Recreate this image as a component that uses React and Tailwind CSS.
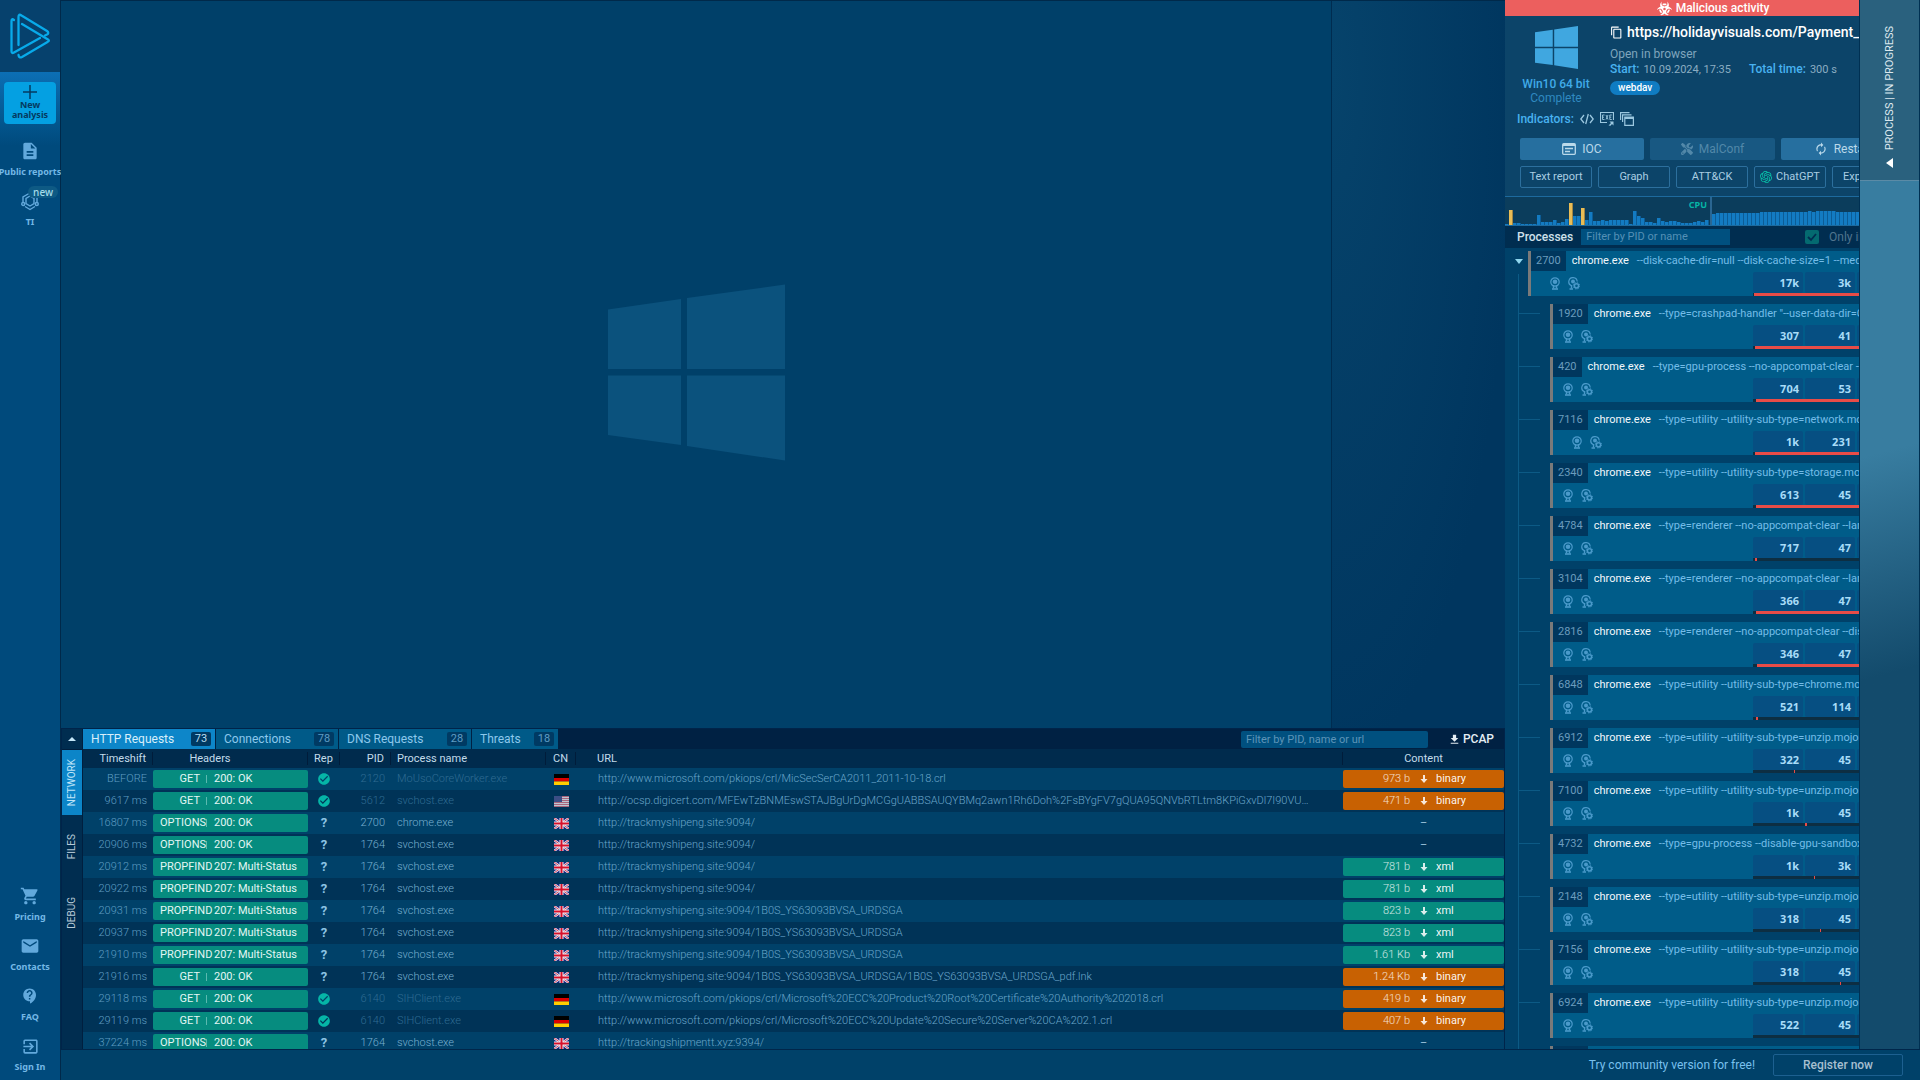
import React from "react";
import {
  MdDescription,
  MdShoppingCart,
  MdEmail,
  MdContactSupport,
  MdExitToApp,
  MdContentCopy,
  MdAutorenew,
  MdFileDownload,
  MdCheckCircle,
} from "react-icons/md";
import { FaBiohazard, FaScrewdriverWrench } from "react-icons/fa6";
import { SiOpenai } from "react-icons/si";

const WindowsLogo = ({ className }) => (
  <svg viewBox="0 0 177 177" className={className} fill="currentColor" aria-hidden="true">
    <path d="M0 25.500L73 15V85H0ZM79 14L177 0.500V85H79ZM0 91.500H73V161L0 151ZM79 91.500H177V176.500L79 162Z" />
  </svg>
);

const BrandLogo = () => (
  <svg viewBox="0 0 42 48" className="h-12 w-[42px]" fill="none" stroke="#08aaea" strokeWidth="2.300" strokeLinejoin="round" strokeLinecap="round" aria-hidden="true">
    <path d="M5 8Q2.500 6 2.500 9V39Q2.500 42 5 40.500L31 26" />
    <path d="M9.500 33V5Q9.500 1.500 12.500 3.500L38 19Q40.500 21 38 22.500L36 23.500" />
    <path d="M13 12L39 27.500Q41 29 38.500 30L13 45Q10 46.500 9.500 43" />
  </svg>
);

const Hexagon = () => (
  <svg viewBox="0 0 18 20" className="h-5 w-[18px]" fill="none" stroke="currentColor" strokeWidth="1.400" aria-hidden="true">
    <path d="M9 5L13 7.500V12.500L9 15L5 12.500V7.500Z" />
    <path d="M2 11V6L8 2.500M16 11V6M4 15.500L9 18.500L14 15.500" />
    <circle cx="2.200" cy="13" r="1.500" />
    <circle cx="15.800" cy="13" r="1.500" />
  </svg>
);

const CodeIcon = () => (
  <svg viewBox="0 0 14 12" className="h-3 w-3.5" fill="none" stroke="currentColor" strokeWidth="1.300" aria-hidden="true">
    <path d="M4 2L0.800 6L4 10M10 2L13.200 6L10 10M8.300 1L5.700 11" />
  </svg>
);

const ExeIcon = () => (
  <svg viewBox="0 0 14 14" className="h-3.5 w-3.5" fill="none" stroke="currentColor" aria-hidden="true">
    <path d="M7 10.500H0.500V0.500H13.500V8" strokeWidth="1.200" />
    <path d="M4.500 3H2.500V7.500H4.500M2.500 5.200H4M6 3L8 7.500M8 3L6 7.500M11.800 3H9.800V7.500H11.800M9.800 5.200H11.300" strokeWidth="0.900" />
    <path d="M8.500 13.500L11 11L9.500 9.500H13.500V13.500L12 12L10.500 13.800Z" fill="currentColor" stroke="none" />
  </svg>
);

const WindowsStack = () => (
  <svg viewBox="0 0 14 14" className="h-3.5 w-3.5" fill="none" stroke="currentColor" strokeWidth="1.200" aria-hidden="true">
    <path d="M0.600 8V0.600H9.500M2.600 10V2.800H11.500" />
    <path d="M4.800 5.200H13.400V13.400H4.800Z" />
    <path d="M4.800 6H13.400" strokeWidth="2" />
  </svg>
);

const ReportIcon = () => (
  <svg viewBox="0 0 14 12" className="h-3 w-3.5" fill="none" stroke="currentColor" strokeWidth="1.300" aria-hidden="true">
    <rect x="0.700" y="0.700" width="12.600" height="10.600" rx="1" />
    <path d="M1 2H13" strokeWidth="2" />
    <path d="M3 5.500H11M3 8.500H8" />
  </svg>
);

const Badge = () => (
  <svg viewBox="0 0 10 13" className="h-[13px] w-2.5" fill="none" stroke="currentColor" aria-hidden="true">
    <circle cx="5" cy="5" r="4.200" strokeWidth="1.200" />
    <circle cx="5" cy="4.800" r="2.300" fill="currentColor" stroke="none" />
    <path d="M3.500 8V11.500M6.500 8V11.500" strokeWidth="1.500" />
    <path d="M2 12H8" strokeWidth="1.600" />
  </svg>
);

const BadgeGear = () => (
  <svg viewBox="0 0 12 13" className="h-[13px] w-3" fill="none" stroke="currentColor" aria-hidden="true">
    <path d="M3.500 8.700A4.200 4.200 0 1 1 9.200 4.500" strokeWidth="1.200" />
    <circle cx="5" cy="4.500" r="2" fill="currentColor" stroke="none" />
    <path d="M3.500 8V11.500" strokeWidth="1.400" />
    <path d="M1.500 12H5" strokeWidth="1.500" />
    <circle cx="8.500" cy="8.800" r="2.100" strokeWidth="1.500" />
    <circle cx="8.500" cy="8.800" r="3.200" strokeWidth="0.900" strokeDasharray="1.400 1.100" />
  </svg>
);

const DownArrow = () => (
  <svg viewBox="0 0 8 8" className="h-2 w-2" fill="currentColor" aria-hidden="true">
    <path d="M3 0H5V4H7.500L4 8L0.500 4H3Z" />
  </svg>
);

const Flag = ({ code }) => {
  if (code === "de")
    return (
      <svg viewBox="0 0 15 11" className="h-[11px] w-[15px]" role="img" aria-label="Germany">
        <path fill="#000" d="M0 0H15V4H0Z" />
        <path fill="#dd0000" d="M0 4H15V7.500H0Z" />
        <path fill="#ffce00" d="M0 7.500H15V11H0Z" />
      </svg>
    );
  if (code === "us")
    return (
      <svg viewBox="0 0 15 11" className="h-[11px] w-[15px]" role="img" aria-label="United States">
        <path fill="#d3d5df" d="M0 0H15V11H0Z" />
        <path stroke="#bb6a80" d="M0 0.500H15M0 2.500H15M0 4.500H15M0 6.500H15M0 8.500H15M0 10.500H15" />
        <path fill="#43518a" d="M0 0H8V6H0Z" />
      </svg>
    );
  return (
    <svg viewBox="0 0 15 11" className="h-[11px] w-[15px]" role="img" aria-label="United Kingdom">
      <path fill="#1a237b" d="M0 0H15V11H0Z" />
      <path stroke="#dfe3f0" strokeWidth="2.400" d="M0 0L15 11M15 0L0 11" />
      <path stroke="#d83045" strokeWidth="0.900" d="M0 0L15 11M15 0L0 11" />
      <path stroke="#eef0f8" strokeWidth="4" d="M7.500 0V11M0 5.500H15" />
      <path stroke="#d8102a" strokeWidth="2" d="M7.500 0V11M0 5.500H15" />
    </svg>
  );
};

const NavItem = ({ icon, label }) => (
  <a href="#" className="flex h-10 flex-col items-center text-[#62a9dc]">
    <span className="flex h-[22px] items-center">{icon}</span>
    <span className="mt-0.5 text-[9px] leading-4 font-bold whitespace-nowrap text-[#74b8e6]">{label}</span>
  </a>
);

const Sidebar = () => (
  <nav className="flex w-[61px] shrink-0 flex-col border-r border-[#00294a] bg-[#004a7c] font-['Noto_Sans',sans-serif]">
    <a href="#" aria-label="Home" className="flex h-[72px] items-center justify-center bg-[#06416d]">
      <BrandLogo />
    </a>
    <div className="h-[74px] bg-linear-to-b from-[#0c6fb5] to-[#004a7c] px-1 pt-2.5">
      <button className="flex h-[42px] w-full flex-col items-center rounded bg-[#04a0e2] pt-[3px] text-[9px] leading-[10px] font-bold text-[#053a60]">
        <svg viewBox="0 0 14 14" className="mb-px h-3.5 w-3.5 shrink-0" stroke="currentColor" strokeWidth="1.500" aria-hidden="true">
          <path d="M7 0V14M0 7H14" />
        </svg>
        <span>New<br />analysis</span>
      </button>
    </div>
    <div className="-mt-1.5 flex flex-col gap-2.5">
      <NavItem label="Public reports" icon={<MdDescription size={20} />} />
      <div className="relative">
        <NavItem label="TI" icon={<Hexagon />} />
        <span className="absolute -top-1 right-0.5 rounded-full bg-[#0e5a84] px-[5px] text-[10px] leading-3 font-medium text-[#a5dcea]">new</span>
      </div>
    </div>
    <div className="mt-auto flex flex-col gap-2.5 pb-[5px]">
      <NavItem label="Pricing" icon={<MdShoppingCart size={20} />} />
      <NavItem label="Contacts" icon={<MdEmail size={20} />} />
      <NavItem label="FAQ" icon={<MdContactSupport size={18} />} />
      <NavItem label="Sign In" icon={<MdExitToApp size={19} />} />
    </div>
  </nav>
);

const tabs = [
  ["HTTP Requests", 73, "w-[132px]"],
  ["Connections", 78, "w-[122px]"],
  ["DNS Requests", 28, "w-[132px]"],
  ["Threats", 18, "w-[86px]"],
];

const T = "http://trackmyshipeng.site:9094/";
const U = "1B0S_YS63093BVSA_URDSGA";
const M = "http://www.microsoft.com/pkiops/crl/";
const requests = [
  ["BEFORE", "GET", "200: OK", true, 2120, "MoUsoCoreWorker.exe", "de", M + "MicSecSerCA2011_2011-10-18.crl", "973 b", "binary"],
  ["9617 ms", "GET", "200: OK", true, 5612, "svchost.exe", "us", "http://ocsp.digicert.com/MFEwTzBNMEswSTAJBgUrDgMCGgUABBSAUQYBMq2awn1Rh6Doh%2FsBYgFV7gQUA95QNVbRTLtm8KPiGxvDl7I90VUCEAJ0LqoXyo4hxxe7H", "471 b", "binary"],
  ["16807 ms", "OPTIONS", "200: OK", false, 2700, "chrome.exe", "gb", T],
  ["20906 ms", "OPTIONS", "200: OK", false, 1764, "svchost.exe", "gb", T],
  ["20912 ms", "PROPFIND", "207: Multi-Status", false, 1764, "svchost.exe", "gb", T, "781 b", "xml"],
  ["20922 ms", "PROPFIND", "207: Multi-Status", false, 1764, "svchost.exe", "gb", T, "781 b", "xml"],
  ["20931 ms", "PROPFIND", "207: Multi-Status", false, 1764, "svchost.exe", "gb", T + U, "823 b", "xml"],
  ["20937 ms", "PROPFIND", "207: Multi-Status", false, 1764, "svchost.exe", "gb", T + U, "823 b", "xml"],
  ["21910 ms", "PROPFIND", "207: Multi-Status", false, 1764, "svchost.exe", "gb", T + U, "1.61 Kb", "xml"],
  ["21916 ms", "GET", "200: OK", false, 1764, "svchost.exe", "gb", T + U + "/" + U + "_pdf.lnk", "1.24 Kb", "binary"],
  ["29118 ms", "GET", "200: OK", true, 6140, "SIHClient.exe", "de", M + "Microsoft%20ECC%20Product%20Root%20Certificate%20Authority%202018.crl", "419 b", "binary"],
  ["29119 ms", "GET", "200: OK", true, 6140, "SIHClient.exe", "de", M + "Microsoft%20ECC%20Update%20Secure%20Server%20CA%202.1.crl", "407 b", "binary"],
  ["37224 ms", "OPTIONS", "200: OK", false, 1764, "svchost.exe", "gb", "http://trackingshipmentt.xyz:9394/"],
];

const headings = [
  ["Timeshift", "w-[70px]", "justify-end pr-1.5"],
  ["Headers", "w-[155px]", "justify-center pr-10"],
  ["Rep", "w-8", "justify-center"],
  ["PID", "w-[51px]", "justify-end pr-1.5"],
  ["Process name", "w-[155px]", "pl-1.5"],
  ["CN", "w-[30px]", "justify-center"],
  ["URL", "", "pl-[21px]"],
  ["Content", "w-[161px]", "justify-center"],
];

const RequestRow = ({ r }) => {
  const [time, method, status, known, pid, name, cn, url, size, kind] = r;
  const dim = known ? "text-[#2f6b92]" : "text-[#78b0d0]";
  return (
    <tr className="h-[22px] odd:bg-[#004169] even:bg-[#003357]">
      <td className="pr-1.5 text-right text-[#5f9dc2]">{time}</td>
      <td>
        <div className="flex h-[18px] items-center rounded-xs bg-[#068c7f] pl-[7px] font-normal whitespace-nowrap text-[#e3f6f4]">
          <span className="flex w-10 justify-end">
            <span className={method === "GET" ? "" : "w-10"}>{method}</span>
          </span>
          <span className={"mx-1.5 h-2 w-px " + (method === "PROPFIND" ? "" : "bg-[#5bb9b0]")} />
          <span className="pl-px">{status}</span>
        </div>
      </td>
      <td>
        <div className="flex justify-center text-[13px] font-bold text-[#8cc4e4]">
          {known ? <MdCheckCircle size={14} className="text-[#05b5a7]" aria-label="Known" /> : "?"}
        </div>
      </td>
      <td className={"pr-1.5 text-right " + dim}>{pid}</td>
      <td className={"pl-1.5 " + dim}>{name}</td>
      <td>
        <div className={"flex justify-center " + (cn === "us" ? "opacity-90" : "")}><Flag code={cn} /></div>
      </td>
      <td className="pr-[34px] pl-[22px] text-[#6aa6ca]"><div className="truncate">{url}</div></td>
      <td>
        {kind ? (
          <button className={"flex h-[18px] w-full items-center rounded-xs " + (kind === "xml" ? "bg-[#068c7f]" : "bg-[#c86102]")}>
            <span className="w-[67px] text-right text-white/80">{size}</span>
            <span className="mr-2 ml-2.5 text-white/85"><DownArrow /></span>
            <span className="font-normal text-white/95">{kind}</span>
          </button>
        ) : (
          <div className="text-center font-normal text-[#9fc7de]">–</div>
        )}
      </td>
    </tr>
  );
};

const SideTab = ({ label, active, className }) => (
  <button className={"flex w-full items-center justify-center " + className + (active ? " bg-[#0c85c8] text-[#bfe4f8]" : " text-[#b6c9d6]")}>
    <span className="rotate-180 text-[10px] leading-3 [writing-mode:vertical-rl]">{label}</span>
  </button>
);

const NetworkPanel = () => (
  <section className="flex h-[321px] shrink-0 border-t border-r border-l border-[#00244a] bg-[#002d50]">
    <div className="flex w-[21px] shrink-0 flex-col border-r border-[#001f3f]">
      <button className="flex h-[21px] items-center justify-center border-b border-[#001f3f]" aria-label="Expand">
        <svg viewBox="0 0 8 4" className="h-1 w-2" fill="#c4e6f8"><path d="M0 4L4 0L8 4Z" /></svg>
      </button>
      <SideTab label="NETWORK" active className="h-[65px]" />
      <SideTab label="FILES" className="h-16" />
      <SideTab label="DEBUG" className="h-[68px]" />
    </div>
    <div className="flex min-w-0 flex-1 flex-col">
      <div className="flex h-5 shrink-0 items-center bg-[#002143]">
        <div className="flex h-5 gap-px">
          {tabs.map(([label, n, w], i) => (
            <button key={label} className={"flex h-full items-center justify-between pr-1 pl-2 text-[12px] whitespace-nowrap " + w + (i === 0 ? " bg-[#0d86c9] text-[#d8effb]" : " bg-[#005a88] text-[#8cc8ec]")}>
              {label}
              <span className={"flex h-3.5 w-5 items-center justify-center rounded-xs bg-[#003a63] text-[11px] " + (i === 0 ? "text-[#b8dcf0]" : "text-[#5f9cc4]")}>{n}</span>
            </button>
          ))}
        </div>
        <input aria-label="Filter requests" placeholder="Filter by PID, name or url" className="ml-auto h-[17px] w-[187px] rounded-xs bg-[#00507f] px-[5px] text-[11px] text-white placeholder:text-[#5d94b8]" />
        <a href="#" className="mr-2.5 ml-5 flex items-center text-[12px] font-medium text-[#e4edf3]">
          <MdFileDownload size={13} className="mr-0.5" />
          PCAP
        </a>
      </div>
      <div className="flex-1 overflow-hidden">
        <table className="w-full table-fixed border-collapse text-left text-[11px] leading-4 font-light">
          <thead>
            <tr className="h-[19px] bg-[#002b4d]">
              {headings.map(([label, w, inner], i) => (
                <th key={label} className={"p-0 font-normal text-[#c3dcea] " + w}>
                  <div className={"flex h-[13px] items-center whitespace-nowrap " + inner + (i === 7 ? "" : " border-r border-[#001c3a]")}>{label}</div>
                </th>
              ))}
            </tr>
          </thead>
          <tbody>
            {requests.map((r) => <RequestRow key={r[0]} r={r} />)}
          </tbody>
        </table>
      </div>
    </div>
  </section>
);

const cpu = [1, 15, 2, 2, 1, 1, 1, 1, 10, 3, 3, 3, 5, 2, 3, 6, 22, 9, 9, 17, 5, 13, 4, 4, 5, 4, 5, 5, 5, 5, 5, 1, 14, 9, 7, 3, 3, 2, 7, 4, 3, 4, 4, 3, 2, 2, 2, 3, 4, 3, 5];
const ram = [11, 12, 12, 12, 12, 12, 12, 12, 12, 12, 12, 12, 13, 13, 13, 13, 13, 13, 13, 13, 13, 13, 13, 13, 14, 13, 14, 14, 14, 14, 14, 13, 13, 13, 13, 13, 13];

const Bars = ({ data, className }) => (
  <div className={"flex h-full items-end overflow-hidden " + className}>
    {data.map((h, i) => (
      <span key={i} style={{ height: h }} className={"w-1 shrink-0 border-r " + (h >= 15 ? "border-[#a08444] bg-[#e9bd56]" : "border-[#0c5c96] bg-[#137bc2]")} />
    ))}
  </div>
);

const UT = "--type=utility --utility-sub-type=";
const RT = "--type=renderer --no-appcompat-clear ";
/* pid, command line, counters, activity bar start and length */
const processes = [
  [1920, '--type=crashpad-handler "--user-data-dir=C:\\Users', "307", "41", 2, 104],
  [420, "--type=gpu-process --no-appcompat-clear --gpu-preferences", "704", "53", 3, 103],
  [7116, UT + "network.mojom.NetworkService", "1k", "231", 2, 104],
  [2340, UT + "storage.mojom.StorageService", "613", "45", 3, 103],
  [4784, RT + "--lang=en-US", "717", "47", 2, 2],
  [3104, RT + "--lang=en-US", "366", "47", 3, 103],
  [2816, RT + "--disable-gpu", "346", "47", 4, 102],
  [6848, UT + "chrome.mojom.ProcessorMetrics", "521", "114", 3, 2],
  [6912, UT + "unzip.mojom.Unzipper", "322", "45", 41, 1],
  [7100, UT + "unzip.mojom.Unzipper", "1k", "45", 52, 2],
  [4732, "--type=gpu-process --disable-gpu-sandbox --use-gl", "1k", "3k", 61, 1],
  [2148, UT + "unzip.mojom.Unzipper", "318", "45", 67, 1],
  [7156, UT + "unzip.mojom.Unzipper", "318", "45", 87, 1],
  [6924, UT + "unzip.mojom.Unzipper", "522", "45", 0, 0],
  [6988, UT + "unzip.mojom.Unzipper", "318", "45", 0, 0],
];

const ProcessCard = ({ p, iconPad }) => {
  const [pid, cmd, a, b, start, len] = p;
  return (
    <article className="h-[45px] min-w-0 flex-1 overflow-hidden border-l-[3px] border-[#7a7a7a] bg-[#005c89]">
      <div className="flex h-5 items-center text-[11px] whitespace-nowrap">
        <span className="flex h-5 items-center bg-[#00375e] px-[5px] text-[#6b9cbd]">{pid}</span>
        <span className="ml-1.5 text-[#f0f7fb]">chrome.exe</span>
        <span className="ml-2 text-[#74bce8]">{cmd}</span>
      </div>
      <div className="flex h-[25px] justify-between">
        <div className={"flex items-center gap-2 text-[#4a9aca] " + iconPad}>
          <Badge />
          <BadgeGear />
        </div>
        <div className="w-[106px] overflow-hidden pt-px font-['Noto_Sans',sans-serif] text-[11px] font-bold text-[#a8dcf8]">
          <div className="flex h-[21px] gap-0.5 leading-[22px]">
            <span className="w-[50px] shrink-0 rounded-xs bg-[#064f82] pr-1 text-right">{a}</span>
            <span className="w-[50px] shrink-0 rounded-xs bg-[#064f82] pr-1 text-right">{b}</span>
            <span className="w-[50px] shrink-0 rounded-xs bg-[#064f82]" />
          </div>
          <div className="h-[3px] bg-[#0d2e42]">
            <div className="h-full bg-[#e84c47]" style={{ marginLeft: start, width: len }} />
          </div>
        </div>
      </div>
    </article>
  );
};

const outlined = "flex h-[22px] w-[72px] shrink-0 items-center justify-center rounded-xs border border-[#2c6f9d] text-[11px] text-[#a9cde2]";

const Details = () => (
  <aside className="flex w-[354px] shrink-0 flex-col overflow-hidden bg-[#004169]">
    <div className="flex h-4 shrink-0 items-center justify-center gap-1 bg-[#ec5f5e] pl-[62px] text-[12px] font-medium text-white">
      <FaBiohazard size={15} />
      Malicious activity
    </div>
    <div className="h-[180px] shrink-0 bg-[#0c4469]">
      <div className="flex h-[92px] pt-2.5 whitespace-nowrap">
        <div className="mr-[3px] flex w-[102px] shrink-0 flex-col items-center text-[12px] leading-[14px]">
          <WindowsLogo className="mb-2 h-[43px] w-[43px] shrink-0 text-[#40a7e0]" />
          <span className="font-medium text-[#40abe8]">Win10 64 bit</span>
          <span className="text-[#2f89c0]">Complete</span>
        </div>
        <div className="min-w-0 flex-1 text-[12px] leading-[15px]">
          <h1 className="mb-[9px] flex h-3 items-center text-[14px] font-medium text-white">
            <MdContentCopy size={13} className="mr-1 shrink-0" />
            https://holidayvisuals.com/Payment_receipt
          </h1>
          <div className="text-[#7fa5bd]">Open in browser</div>
          <div className="flex text-[11px] text-[#8badc2]">
            <span className="mr-1 text-[12px] font-medium text-[#48b2f0]">Start:</span>10.09.2024, 17:35
            <span className="mr-1 ml-[18px] text-[12px] font-medium text-[#48b2f0]">Total time:</span>300 s
          </div>
          <span className="mt-1 inline-block rounded-full bg-[#107cc2] px-2 text-[10px] leading-[14px] font-medium text-white">webdav</span>
        </div>
      </div>
      <div className="flex h-[22px] items-center gap-1.5 pl-3 text-[12px] font-medium text-[#48b2f0]">
        Indicators:
        <span className="flex items-center gap-1.5 text-[#9cc8e0]"><CodeIcon /><ExeIcon /><WindowsStack /></span>
      </div>
      <div className="mt-2 flex gap-1.5 pl-[15px] text-[12px] text-[#bad9ea]">
        <button className="flex h-[22px] w-[124px] shrink-0 items-center justify-center gap-1.5 rounded-xs bg-[#266f9f]"><ReportIcon />IOC</button>
        <button disabled className="flex h-[22px] w-[125px] shrink-0 items-center justify-center gap-1.5 rounded-xs bg-[#185882] text-[#5288a9]"><FaScrewdriverWrench size={12} />MalConf</button>
        <button className="flex h-[22px] w-[124px] shrink-0 items-center justify-center gap-1.5 rounded-xs bg-[#266f9f]"><MdAutorenew size={14} />Restart</button>
      </div>
      <div className="mt-1.5 flex gap-1.5 pl-[15px]">
        <button className={outlined}>Text report</button>
        <button className={outlined}>Graph</button>
        <button className={outlined}>ATT&amp;CK</button>
        <button className={outlined}><SiOpenai size={12} className="mr-1 text-[#08c8ac]" />ChatGPT</button>
        <button className={outlined}>
          Export
          <svg viewBox="0 0 8 5" className="ml-2.5 h-[5px] w-2" fill="currentColor" aria-hidden="true"><path d="M0 0H8L4 5Z" /></svg>
        </button>
      </div>
    </div>
    <div className="flex h-[30px] shrink-0 border-y border-[#1d6a9e] bg-[#0b3d5c]">
      <div className="relative h-full w-[205px] shrink-0">
        <Bars data={cpu} className="" />
        <span className="absolute top-0.5 right-[3px] font-['Noto_Sans',sans-serif] text-[9px] leading-[12px] font-bold text-[#05b5a7]">CPU</span>
      </div>
      <Bars data={ram} className="flex-1 border-l-2 border-[#2a6692]" />
    </div>
    <div className="flex h-[22px] shrink-0 items-center bg-[#002d50] pl-3 text-[12px]">
      <h2 className="mr-2 font-medium text-[#cfe0ea]">Processes</h2>
      <input aria-label="Filter processes" placeholder="Filter by PID or name" className="h-4 w-[149px] bg-[#00507f] px-[5px] text-[11px] text-white placeholder:text-[#5590b6]" />
      <label className="ml-auto flex w-[54px] shrink-0 items-center gap-2.5 overflow-hidden whitespace-nowrap text-[#50748e]">
        <span className="grid shrink-0">
          <input type="checkbox" defaultChecked className="col-start-1 row-start-1 h-3.5 w-3.5 appearance-none rounded-xs bg-[#046a70]" />
          <svg viewBox="0 0 14 14" className="pointer-events-none col-start-1 row-start-1 h-3.5 w-3.5" fill="none" stroke="#002d50" strokeWidth="1.800" aria-hidden="true"><path d="M3 7L6 10L11 4" /></svg>
        </span>
        Only important
      </label>
    </div>
    <div className="min-h-0 flex-1 overflow-hidden pt-[3px]">
      <div className="flex">
        <button aria-label="Collapse" className="flex w-[23px] items-start justify-center pt-2 pl-[5px]">
          <svg viewBox="0 0 8 5" className="h-[5px] w-2" fill="#8fd6ee"><path d="M0 0H8L4 5Z" /></svg>
        </button>
        <ProcessCard p={[2700, "--disk-cache-dir=null --disk-cache-size=1 --media-cache", "17k", "3k", 1, 105]} iconPad="pl-[19px]" />
      </div>
      <div className="-mt-[22px] ml-[13px] border-l border-[#0c5a85] pt-[22px]">
        {processes.map((p) => (
          <div key={p[0]} className="flex pt-2">
            <div className="mt-[9px] mr-2.5 h-px w-[21px] bg-[#0c5a85]" />
            <ProcessCard p={p} iconPad={p[0] === 7116 ? "pl-[19px]" : "pl-2.5"} />
          </div>
        ))}
      </div>
    </div>
  </aside>
);

const Drawer = () => (
  <div className="w-[61px] shrink-0 border-x border-[#003052] bg-linear-165 from-[#387da0] from-43% to-[#134b6c] to-64%">
    <button className="flex h-[181px] w-full flex-col items-center justify-end gap-2 border-b border-[#5b8ba6] bg-[#2a617e] pb-3 text-[11px] leading-[14px] text-[#dce8ee]">
      <span className="rotate-180 whitespace-nowrap [writing-mode:vertical-rl]">PROCESS | IN PROGRESS</span>
      <svg viewBox="0 0 7 10" className="h-2.5 w-[7px]" fill="#fff" aria-hidden="true"><path d="M7 0V10L0 5Z" /></svg>
    </button>
  </div>
);

export default function App() {
  return (
    <div className="flex h-screen overflow-hidden bg-[#004169] font-[Roboto,sans-serif] text-[12px]">
      <Sidebar />
      <div className="flex min-w-0 flex-1 flex-col">
        <div className="flex min-h-0 flex-1">
          <main className="flex min-w-0 flex-1 flex-col">
            <div className="flex min-h-0 flex-1 border-t border-[#00294a]">
              <div className="flex flex-1 items-center justify-center border-r border-[#002c50] bg-[#004069] pt-4">
                <WindowsLogo className="h-[177px] w-[177px] text-[#0b527d]" />
              </div>
              <div className="w-[173px] bg-radial-[at_0%_10%] from-[#06436b] to-[#00365f] to-75%" />
            </div>
            <NetworkPanel />
          </main>
          <Details />
          <Drawer />
        </div>
        <footer className="flex h-[31px] shrink-0 items-center justify-end border-t border-[#00264a] bg-[#004169] pr-[17px]">
          <span className="mr-[18px] text-[12px] text-[#78c0ee]">Try community version for free!</span>
          <button className="h-[22px] w-[130px] rounded-xs border border-[#1d6090] text-[12px] font-medium text-[#a6bfd0]">Register now</button>
        </footer>
      </div>
    </div>
  );
}
